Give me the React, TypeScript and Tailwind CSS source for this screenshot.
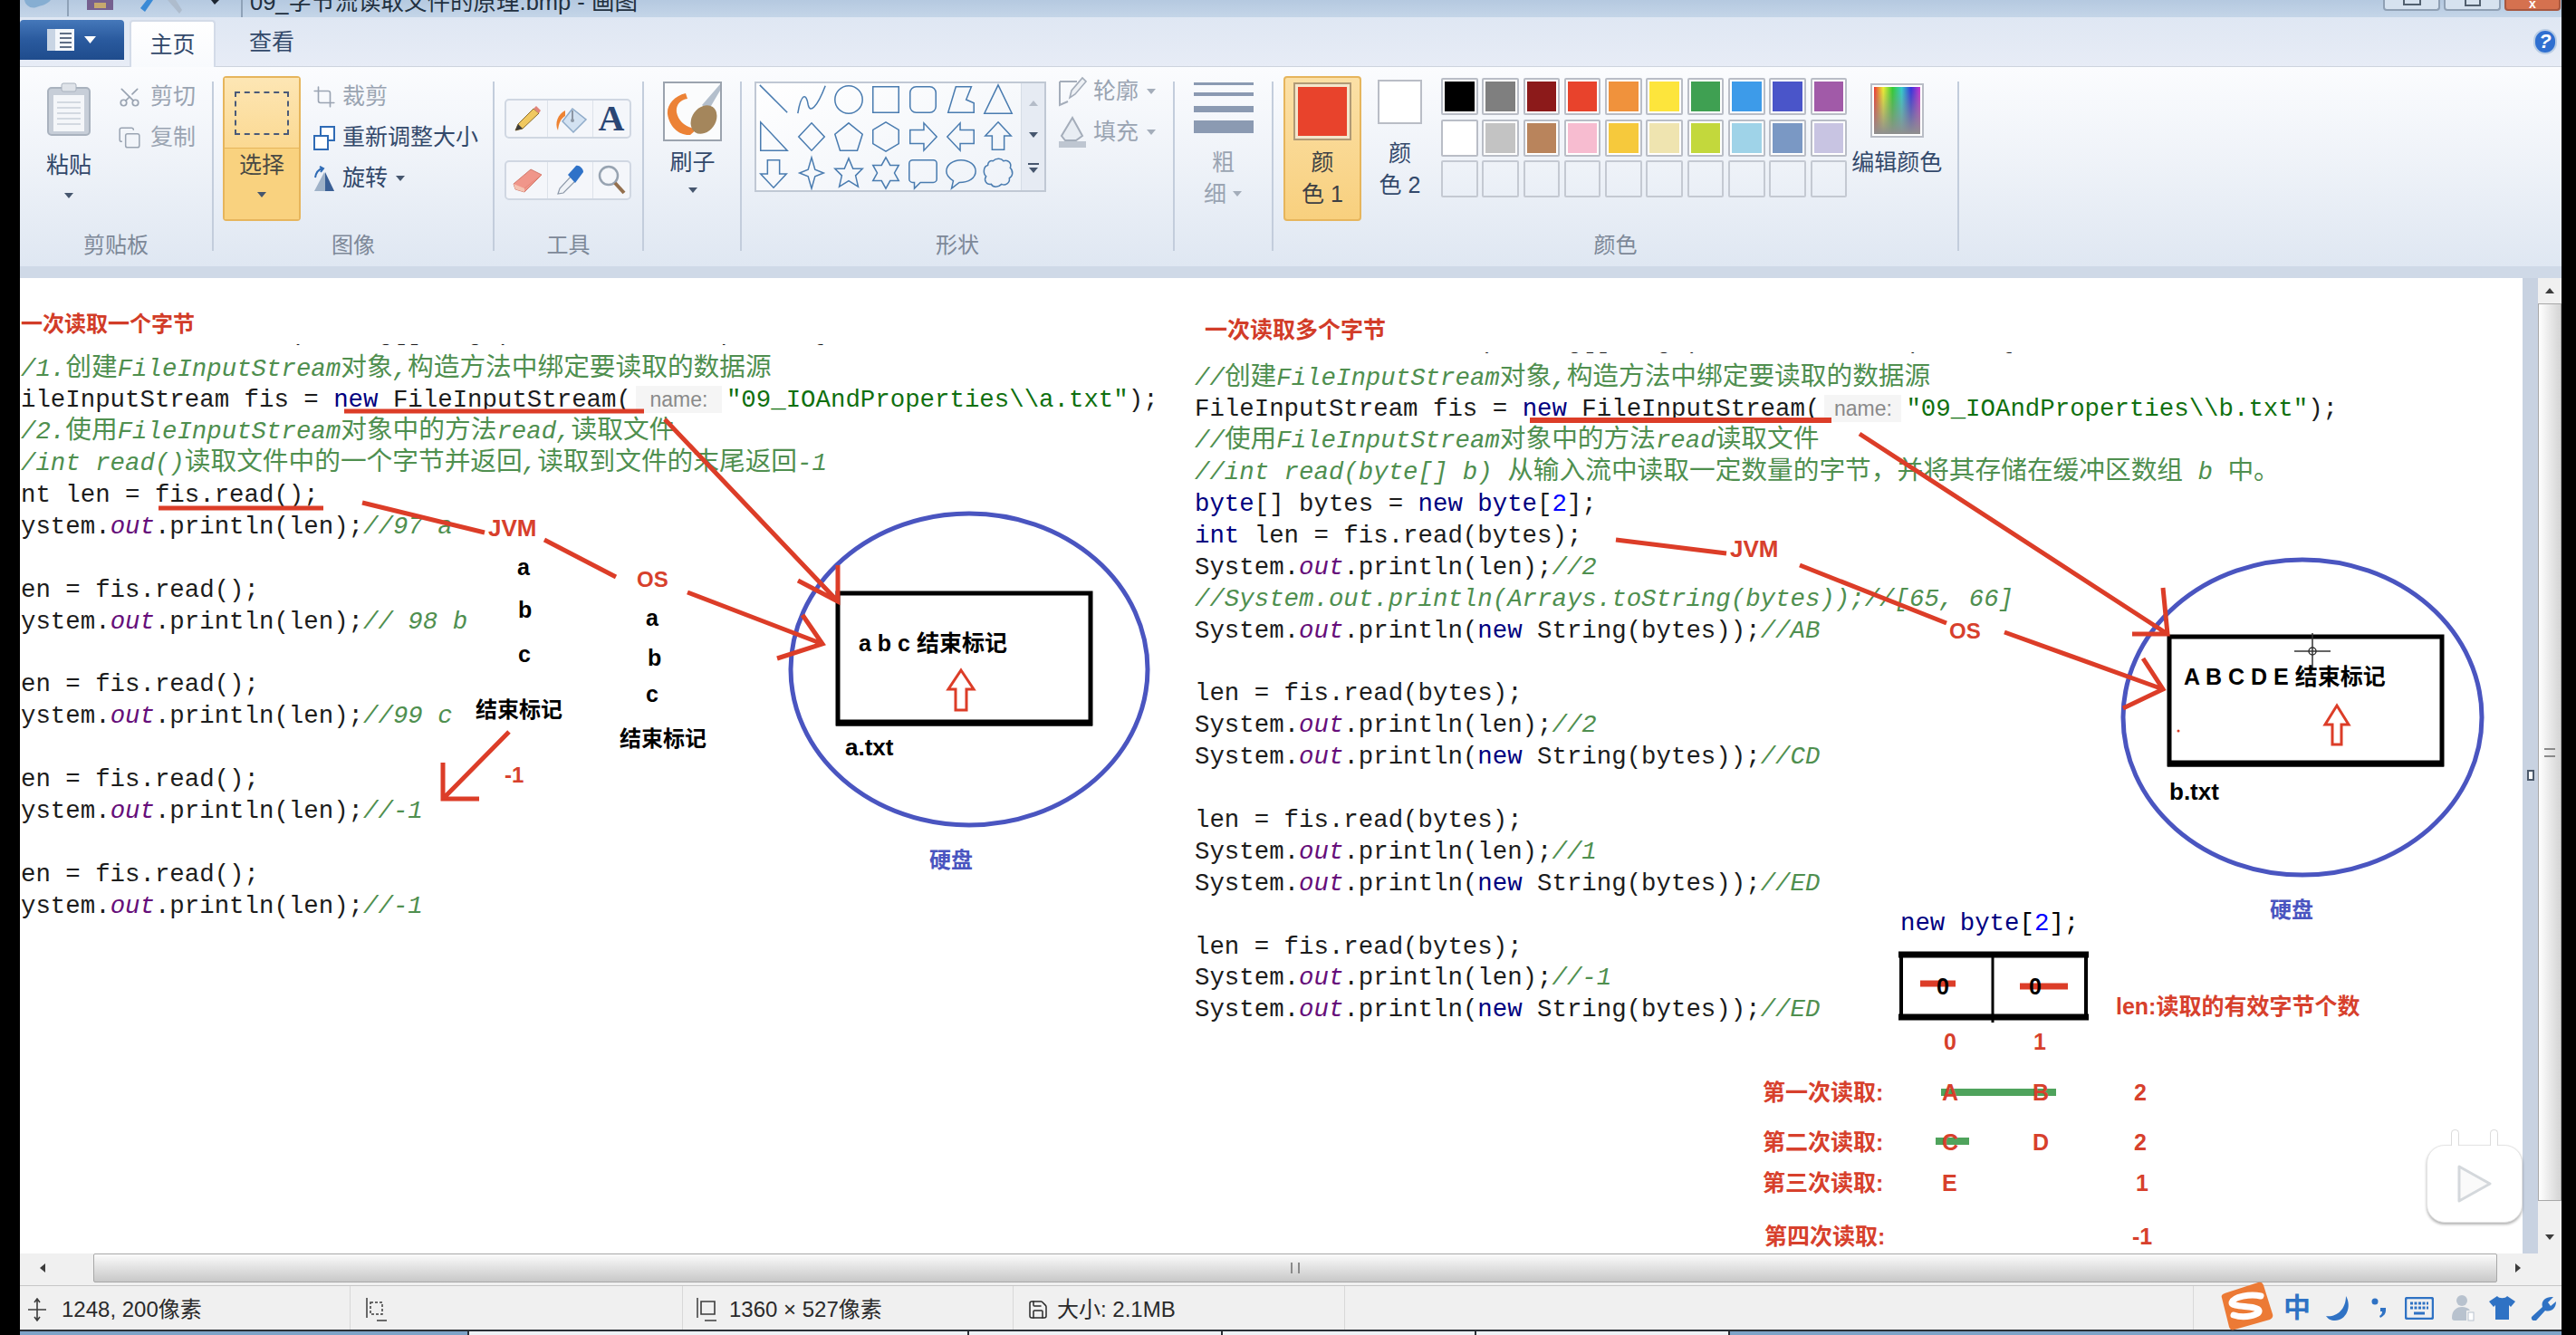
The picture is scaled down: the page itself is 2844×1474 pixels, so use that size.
import type { ReactNode } from "react";
import { Scissors, Copy, Crop, Save } from "lucide-react";

const row1 = ["#000000", "#7f7f7f", "#8c1a1a", "#e8432c", "#f0923c", "#fde53c", "#3fa052", "#3d9be9", "#4a55c9", "#a15aa8"];
const row2 = ["#ffffff", "#c3c3c3", "#b9845c", "#f7bcd0", "#f6c93c", "#efe4b0", "#c3d83c", "#9fd3e8", "#7a98c4", "#c8c4e2"];

function Caret({ dim }: { dim?: boolean }) {
  return (
    <svg width="12" height="8" viewBox="0 0 12 8" className="shrink-0">
      <path d="M1 1h10L6 7z" fill={dim ? "#a4adba" : "#46566e"} />
    </svg>
  );
}

function Sep() {
  return <div className="mt-[16px] h-[187px] w-[2px] shrink-0 bg-[#c3cddc]" />;
}

function Group({ w, label, children }: { w: string; label: string; children: ReactNode }) {
  return (
    <div className={`relative flex h-full shrink-0 flex-col ${w}`}>
      <div className="flex h-[185px]">{children}</div>
      <div className="text-center text-[24px] leading-[24px] text-[#7d8898]">{label}</div>
    </div>
  );
}

function SmallRow({ icon, text, dim, caret }: { icon: ReactNode; text: string; dim?: boolean; caret?: boolean }) {
  return (
    <div className={`flex h-[45px] items-center text-[25px] ${dim ? "text-[#9aa4b2]" : "text-[#33496b]"}`}>
      {icon}
      <span>{text}</span>
      {caret && (
        <span className="ml-[8px]">
          <Caret dim={dim} />
        </span>
      )}
    </div>
  );
}

// shapes gallery, drawn around 0,0 and moved into their cell
const shapes = [
  "M-16 -17L16 15",
  "M-16 16C-12 -8 -6 -8 -4 6C-2 16 6 10 16 -16",
  "M-16 0a16 16 0 1 0 32 0a16 16 0 1 0 -32 0Z",
  "M-15 -15H15V15H-15Z",
  "M-8 -15H8a7 7 0 0 1 7 7V8a7 7 0 0 1 -7 7H-8a7 7 0 0 1 -7 -7V-8a7 7 0 0 1 7 -7Z",
  "M-15 15L-6 -15H12L6 0L15 4V15Z",
  "M0 -17L16 16H-16Z",
  "M-15 -17V16H16Z",
  "M0 -16L15 0L0 16L-15 0Z",
  "M0 -16L16 -3L10 16H-10L-16 -3Z",
  "M0 -17L15 -8V8L0 17L-15 8V-8Z",
  "M-15 -8H1V-16L16 0L1 16V8H-15Z",
  "M15 -8H-1V-16L-16 0L-1 16V8H15Z",
  "M0 -17L15 -1H7V15H-7V-1H-15Z",
  "M0 17L15 1H7V-15H-7V1H-15Z",
  "M0 -18L4 -4L14 0L4 4L0 18L-4 4L-14 0L-4 -4Z",
  "M0 -17L5 -5L16 -5L8 3L11 16L0 9L-11 16L-8 3L-16 -5L-5 -5Z",
  "M0 -18L5 -9L15 -9L10 0L15 9L5 9L0 18L-5 9L-15 9L-10 0L-15 -9L-5 -9Z",
  "M-12 -15H12a4 4 0 0 1 4 4V7a4 4 0 0 1 -4 4H-3L-10 18V11H-12a4 4 0 0 1 -4 -4V-11a4 4 0 0 1 4 -4Z",
  "M0 -15C10 -15 17 -9 17 -2C17 6 9 11 -2 11L-11 18L-9 9C-14 6 -17 3 -17 -2C-17 -9 -10 -15 0 -15Z",
  "M-6 -14C-2 -18 4 -17 6 -14C12 -16 16 -11 14 -6C18 -2 17 4 13 6C14 12 8 15 4 13C0 17 -6 17 -8 13C-14 14 -17 8 -14 4C-18 0 -17 -8 -12 -9C-12 -13 -9 -15 -6 -14Z",
];
const cellX = [21, 63, 104, 145, 186, 228, 269];
const cellY = [20, 61, 101];

function Gallery() {
  return (
    <div className="mt-[6px] flex h-[122px] w-[322px] shrink-0 border-2 border-[#c0c8d4] bg-gradient-to-br from-white to-[#eef2f8]">
      <svg width="292" height="118" viewBox="0 0 292 118" className="shrink-0">
        {shapes.map((d, i) => (
          <path
            key={i}
            d={d}
            transform={`translate(${cellX[i % 7] - 2} ${cellY[Math.floor(i / 7)] - 2}) scale(0.95)`}
            fill="none"
            stroke="#4a7cb0"
            strokeWidth="1.6"
          />
        ))}
      </svg>
      <div className="flex flex-1 flex-col items-center justify-around border-l border-[#d5dce6] bg-[#e6ebf3] py-[4px]">
        <svg width="12" height="8" viewBox="0 0 12 8">
          <path d="M1 7h10L6 1z" fill="#b4bcc8" />
        </svg>
        <Caret />
        <div className="flex flex-col items-center gap-[2px]">
          <div className="h-[2px] w-[12px] bg-[#46566e]" />
          <Caret />
        </div>
      </div>
    </div>
  );
}

function Swatch({ color, empty }: { color?: string; empty?: boolean }) {
  return (
    <div className={`h-[41px] rounded-[2px] border-2 ${empty ? "border-[#c4c9d2]" : "border-[#b9bdc6] bg-white p-[2px]"}`}>
      {color && <div className="h-full w-full" style={{ background: color }} />}
    </div>
  );
}

function Ribbon() {
  return (
    <div className="flex h-[220px] shrink-0 bg-gradient-to-b from-[#fbfcfe] via-[#eef2f8] to-[#dfe7f2] [font-family:'Liberation_Sans','Noto_Sans_CJK_SC',sans-serif]">
      <Group w="w-[212px]" label="剪贴板">
        <div className="ml-[14px] mt-[17px] flex w-[80px] flex-col items-center text-[25px] leading-[26px] text-[#33496b]">
          <svg width="50" height="60" viewBox="0 0 50 60">
            <rect x="2" y="6" width="46" height="52" rx="4" fill="#c7ced8" stroke="#a9b2be" strokeWidth="2" />
            <rect x="8" y="14" width="34" height="40" fill="#f4f6f9" />
            <path d="M12 22h26M12 28h26M12 34h26M12 40h26M12 46h26" stroke="#d3d9e1" strokeWidth="2" />
            <rect x="17" y="1" width="16" height="9" rx="2" fill="#dfe3e9" stroke="#a9b2be" />
          </svg>
          <span className="mt-[18px]">粘贴</span>
          <span className="mt-[17px]">
            <Caret />
          </span>
        </div>
        <div className="ml-[14px] mt-[10px]">
          <SmallRow dim text="剪切" icon={<Scissors className="mr-[10px] h-[26px] w-[26px] -rotate-90" strokeWidth={1.6} />} />
          <SmallRow dim text="复制" icon={<Copy className="mr-[10px] h-[26px] w-[26px]" strokeWidth={1.4} />} />
        </div>
      </Group>
      <Sep />
      <Group w="w-[308px]" label="图像">
        <div className="ml-[10px] mt-[10px] flex h-[160px] w-[86px] flex-col rounded-[4px] border-2 border-[#e6b55c] text-[25px] leading-[26px] text-[#4a4a44]">
          <div className="flex h-[78px] items-center justify-center border-b border-[#e6b55c] bg-gradient-to-b from-[#fde6b4] to-[#fbd992]">
            <div className="h-[48px] w-[60px] border-2 border-dashed border-[#4a5a78]" />
          </div>
          <div className="flex flex-1 flex-col items-center bg-[#f9d27f] pt-[5px]">
            <span>选择</span>
            <span className="mt-[16px]">
              <Caret />
            </span>
          </div>
        </div>
        <div className="ml-[13px] mt-[10px]">
          <SmallRow dim text="裁剪" icon={<Crop className="mr-[7px] h-[26px] w-[26px]" strokeWidth={1.5} />} />
          <SmallRow
            text="重新调整大小"
            icon={
              <svg width="26" height="30" viewBox="0 0 26 30" className="mr-[7px]">
                <rect x="9" y="3" width="15" height="15" fill="#fff" stroke="#2f6bb5" strokeWidth="2" />
                <rect x="2" y="13" width="15" height="15" fill="#fff" stroke="#2f6bb5" strokeWidth="2" />
              </svg>
            }
          />
          <SmallRow
            caret
            text="旋转"
            icon={
              <svg width="26" height="30" viewBox="0 0 26 30" className="mr-[7px]">
                <path d="M13 8L24 29H2Z" fill="#9fb2c8" />
                <path d="M14 8L24 29H14Z" fill="#3a5f95" />
                <path d="M3 14C4 8 7 5 11 4M8 2l4 2l-3 4" fill="none" stroke="#2f6bb5" strokeWidth="2" />
              </svg>
            }
          />
        </div>
      </Group>
      <Sep />
      <Group w="w-[163px]" label="工具">
        <div className="ml-[11px] mt-[35px] flex flex-col gap-[24px]">
          <div className="flex h-[44px] w-[140px] rounded-[5px] border-2 border-[#d0d7e2] bg-[#f4f6fa]">
            <div className="flex w-[46px] items-center justify-center border-r border-[#dde2ea]">
              <svg width="32" height="30" viewBox="0 0 32 30">
                <path d="M3 28L6 21L23 4L29 9L11 26Z" fill="#f0c860" stroke="#8a6a2a" strokeWidth="1" />
                <path d="M23 4L26 1L31 6L29 9Z" fill="#e2857a" />
                <path d="M3 28L6 21L11 26Z" fill="#3c3c3c" />
              </svg>
            </div>
            <div className="flex w-[50px] items-center justify-center border-r border-[#dde2ea]">
              <svg width="36" height="34" viewBox="0 0 36 34">
                <path d="M20 6L35 18L21 32L9 20Z" fill="#d3e2f2" stroke="#8fabc9" strokeWidth="1.5" />
                <path d="M20 8V18" stroke="#8c96a4" strokeWidth="2" />
                <circle cx="20" cy="19" r="2" fill="#8c96a4" />
                <path d="M12 8C4 12 0 22 4 30C5 22 7 17 12 14Z" fill="#ee8333" />
              </svg>
            </div>
            <div className="flex flex-1 items-center justify-center text-[40px] font-bold leading-none text-[#2a4674] [font-family:'Liberation_Serif',serif]">
              A
            </div>
          </div>
          <div className="flex h-[44px] w-[140px] rounded-[5px] border-2 border-[#d0d7e2] bg-[#f4f6fa]">
            <div className="flex w-[46px] items-center justify-center border-r border-[#dde2ea]">
              <svg width="34" height="32" viewBox="0 0 34 32">
                <path d="M2 20L21 4L33 10L14 29L4 26Z" fill="#f0968a" stroke="#d07a6c" strokeWidth="1" />
                <path d="M2 20L14 25L14 29L4 26Z" fill="#f5c3b2" />
                <path d="M14 25L33 10" stroke="#e88577" strokeWidth="1" />
              </svg>
            </div>
            <div className="flex w-[50px] items-center justify-center border-r border-[#dde2ea]">
              <svg width="32" height="34" viewBox="0 0 32 34">
                <path d="M2 32L4 26L16 13L21 18L8 31Z" fill="#f0f3f7" stroke="#8c98a8" strokeWidth="1.2" />
                <path d="M13 11L22 1C25 0 30 4 30 8L21 20Z" fill="#2f72c8" />
              </svg>
            </div>
            <div className="flex flex-1 items-center justify-center">
              <svg width="32" height="34" viewBox="0 0 32 34">
                <circle cx="13" cy="12" r="10" fill="none" stroke="#97a3b1" strokeWidth="2.5" />
                <path d="M20 20L30 31" stroke="#94704e" strokeWidth="4" />
              </svg>
            </div>
          </div>
        </div>
      </Group>
      <Sep />
      <Group w="w-[106px]" label="">
        <div className="ml-[21px] mt-[16px] flex w-[65px] flex-col items-center text-[25px] leading-[26px] text-[#33496b]">
          <svg width="65" height="66" viewBox="0 0 65 66">
            <rect x="1" y="1" width="63" height="64" fill="#fbfcfd" stroke="#9ba3ae" strokeWidth="2" />
            <path d="M25 13C12 16 4 26 5 36C7 50 18 60 30 59L38 52C26 52 17 44 15 34C14 26 19 20 27 19Z" fill="#ec8236" />
            <path d="M50 32L63 10V3L43 26Z" fill="#b4bfcc" />
            <ellipse cx="45" cy="42" rx="13" ry="17" transform="rotate(35 45 42)" fill="#a4865c" />
          </svg>
          <span className="mt-[10px]">刷子</span>
          <span className="mt-[14px]">
            <Caret />
          </span>
        </div>
      </Group>
      <Sep />
      <Group w="w-[476px]" label="形状">
        <div className="ml-[14px] mt-[10px] flex">
          <Gallery />
          <div className="-mt-[6px] ml-[13px]">
            <SmallRow
              dim
              caret
              text="轮廓"
              icon={
                <svg width="32" height="34" viewBox="0 0 32 34" className="mr-[7px]">
                  <path d="M2 6H21M2 6V32L11 28" fill="none" stroke="#a4adba" strokeWidth="2" />
                  <path d="M13 24L15 16L27 2L31 6L19 20Z" fill="#eef1f5" stroke="#a4adba" strokeWidth="1.6" />
                </svg>
              }
            />
            <SmallRow
              dim
              caret
              text="填充"
              icon={
                <svg width="32" height="36" viewBox="0 0 32 36" className="mr-[7px]">
                  <path d="M16 2L27 22L20 27H8L4 22Z" fill="#e8edf3" stroke="#a4adba" strokeWidth="2" />
                  <rect x="1" y="28" width="30" height="7" fill="#bec6d1" />
                </svg>
              }
            />
          </div>
        </div>
      </Group>
      <Sep />
      <Group w="w-[107px]" label="">
        <div className="mt-[17px] flex w-full flex-col items-center text-[25px] leading-[26px] text-[#9aa4b2]">
          <div className="h-[3px] w-[66px] bg-[#8b9ab2]" />
          <div className="mt-[8px] h-[4px] w-[66px] bg-[#8b9ab2]" />
          <div className="mt-[11px] h-[7px] w-[66px] bg-[#8b9ab2]" />
          <div className="mt-[9px] h-[14px] w-[66px] bg-[#8b9ab2]" />
          <span className="mt-[19px]">粗</span>
          <span className="mt-[9px] flex items-center gap-[6px]">
            细
            <Caret dim />
          </span>
        </div>
      </Group>
      <Sep />
      <Group w="w-[755px]" label="颜色">
        <div className="ml-[11px] mt-[10px] flex h-[160px] w-[86px] shrink-0 flex-col items-center rounded-[4px] border-2 border-[#e6b55c] bg-gradient-to-b from-[#fbe0a6] to-[#f8d07e] text-[25px] leading-[26px] text-[#3d3f44]">
          <div className="mt-[5px] h-[64px] w-[64px] border-2 border-[#b09a76] bg-[#f3e6cc] p-[3px]">
            <div className="h-full w-full bg-[#e8432c]" />
          </div>
          <span className="mt-[11px]">颜</span>
          <span className="mt-[9px]">色 1</span>
        </div>
        <div className="mt-[14px] flex w-[85px] shrink-0 flex-col items-center text-[25px] leading-[26px] text-[#33496b]">
          <div className="h-[49px] w-[49px] border-2 border-[#b9bdc6] bg-white" />
          <span className="mt-[19px]">颜</span>
          <span className="mt-[9px]">色 2</span>
        </div>
        <div className="mt-[12px] grid h-[132px] shrink-0 grid-cols-[repeat(10,40.5px)] gap-x-[4.8px] gap-y-[4.5px] pl-[3px]">
          {row1.map((c) => (
            <Swatch key={c} color={c} />
          ))}
          {row2.map((c) => (
            <Swatch key={c} color={c} />
          ))}
          {row1.map((c) => (
            <Swatch key={c} empty />
          ))}
        </div>
        <div className="ml-[5px] mt-[18px] flex w-[100px] shrink-0 flex-col items-center text-[25px] leading-[26px] text-[#33496b]">
          <div className="h-[60px] w-[59px] border-2 border-[#b9bdc6] bg-white p-[2px]">
            <div className="h-full w-full bg-[linear-gradient(to_bottom,transparent,#8f8f8f),linear-gradient(to_right,#e33,#ee3,#3c3,#3cc,#33d,#c3c)]" />
          </div>
          <span className="mt-[14px] whitespace-nowrap">编辑颜色</span>
        </div>
      </Group>
      <Sep />
    </div>
  );
}

function TopBars() {
  return (
    <div className="shrink-0 [font-family:'Liberation_Sans','Noto_Sans_CJK_SC',sans-serif]">
      <div className="flex h-[19px] items-end overflow-hidden bg-gradient-to-b from-[#b5c9e0] to-[#c4d5e8] text-[25.5px] leading-[34px] text-[#22303f]">
        <svg width="244" height="19" viewBox="0 0 244 19" className="shrink-0">
          <path d="M5 0C6 6 12 10 18 8C24 6 30 5 34 0Z" fill="#86aed2" />
          <path d="M53 0V18" stroke="#8fa2b8" strokeWidth="2" />
          <rect x="74" y="0" width="29" height="11" fill="#75608f" />
          <rect x="82" y="3" width="13" height="6" fill="#c6a86e" />
          <path d="M140 0L133 9L138 13L147 0Z" fill="#3a8ad6" />
          <path d="M163 0L176 15L179 11L172 0Z" fill="#aebccd" />
          <path d="M211 0H220L215 5Z" fill="#1c2530" />
        </svg>
        <div className="mr-[8px] h-[19px] w-[2px] bg-[#8fa2b8]" />
        <span className="whitespace-pre">09_字节流读取文件的原理.bmp - 画图</span>
        <div className="ml-auto flex items-start gap-[4px] self-start pr-[1px]">
          <div className="flex h-[12px] w-[63px] justify-center rounded-b-[4px] border-2 border-t-0 border-[#8fa0b4] bg-[#d6e2ef]">
            <div className="h-[6px] w-[20px] border-b-2 border-l-2 border-r-2 border-[#52606f]" />
          </div>
          <div className="flex h-[12px] w-[63px] justify-center rounded-b-[4px] border-2 border-t-0 border-[#8fa0b4] bg-[#d6e2ef]">
            <div className="h-[7px] w-[18px] border-b-2 border-l-2 border-r-2 border-[#52606f]" />
          </div>
          <div className="flex h-[12px] w-[62px] justify-center rounded-b-[4px] border-2 border-t-0 border-[#a8573f] bg-[#d5714f] text-[14px] font-bold leading-[8px] text-white">
            x
          </div>
        </div>
      </div>
      <div className="flex h-[54px] items-start bg-gradient-to-b from-[#dfe7f3] to-[#e7ecf6] text-[25px] leading-none">
        <div className="mt-[3px] flex h-[44px] w-[115px] items-center justify-center gap-[10px] rounded-t-[4px] bg-gradient-to-b from-[#4578ba] via-[#2a5a9e] to-[#1f4c8d]">
          <svg width="30" height="24" viewBox="0 0 30 24">
            <rect x="0" y="0" width="30" height="24" fill="#f4f7fb" />
            <rect x="0" y="0" width="9" height="24" fill="#c9d5e4" />
            <path d="M14 5H27M14 10H27M14 15H27M14 20H27" stroke="#5f6f86" strokeWidth="2" />
          </svg>
          <svg width="15" height="10" viewBox="0 0 15 10">
            <path d="M1 1h13L7.5 9z" fill="#fff" />
          </svg>
        </div>
        <div className="ml-[6px] mt-[3px] flex h-[52px] w-[95px] items-center justify-center rounded-t-[4px] border-2 border-b-0 border-[#d3dbe8] bg-gradient-to-b from-white to-[#f8fafd] text-[#33496b]">
          主页
        </div>
        <div className="ml-[37px] flex h-[54px] items-center text-[#33496b]">查看</div>
        <div className="ml-auto mr-[5px] mt-[13px] flex h-[28px] w-[26px] items-center justify-center rounded-full border-2 border-[#b8cce4] bg-[#2f6fd0] text-[22px] font-bold italic text-white">
          ?
        </div>
      </div>
      <div className="h-[1px] bg-[#cdd3de]" />
    </div>
  );
}

function Hint({ w }: { w: string }) {
  return (
    <span className={`mx-[5px] inline-block bg-[#f5f5f5] text-center text-[23px] leading-[30px] text-[#8a8a8a] [font-family:'Liberation_Sans',sans-serif] ${w}`}>
      name:
    </span>
  );
}

function K({ children }: { children: ReactNode }) {
  return <span className="text-[#000080]">{children}</span>;
}

function Cm({ text }: { text: string }) {
  return (
    <span className="italic text-[#4f8f4f]">
      {text.split(/([\u3000-\u9fff\uff00-\uffef]+)/).map((run, i) =>
        i % 2 ? (
          <span key={i} className="text-[28.7px] not-italic leading-none">
            {run}
          </span>
        ) : (
          run
        ),
      )}
    </span>
  );
}

function Pr({ s }: { s: string }) {
  return (
    <>
      {s}.<span className="italic text-[#660e7a]">out</span>.println
    </>
  );
}

function Ln({ children }: { children?: ReactNode }) {
  return <div className="h-[34.9px] whitespace-pre">{children}</div>;
}

function Specks({ text }: { text: string }) {
  return (
    <div className="flex h-[6px] items-end overflow-hidden">
      <div className="whitespace-pre">{text}</div>
    </div>
  );
}

function LeftCode() {
  return (
    <div className="w-[1296px] shrink-0 pl-[1px] pt-[39px] text-[27.4px] leading-[34.9px] text-[#1c1c1c] [font-family:'Liberation_Mono','Noto_Sans_CJK_SC',monospace]">
      <div className="mb-[10px] h-[24px] text-[24px] font-bold leading-[24px] text-[#d23c28] [font-family:'Liberation_Sans','Noto_Sans_CJK_SC',sans-serif]">
        一次读取一个字节
      </div>
      <Specks text="c static void main(String[] args) throws IOException {" />
      <div className="h-[4.5px]" />
      <Ln><Cm text="/1.创建FileInputStream对象,构造方法中绑定要读取的数据源" /></Ln>
      <Ln>
        ileInputStream fis = <K>new</K> FileInputStream(<Hint w="w-[95px]" />
        <span className="text-[#107010]">"09_IOAndProperties\\a.txt"</span>);
      </Ln>
      <Ln><Cm text="/2.使用FileInputStream对象中的方法read,读取文件" /></Ln>
      <Ln><Cm text="/int read()读取文件中的一个字节并返回,读取到文件的末尾返回-1" /></Ln>
      <Ln>nt len = fis.read();</Ln>
      <Ln><Pr s="ystem" />(len);<Cm text="//97 a" /></Ln>
      <Ln />
      <Ln>en = fis.read();</Ln>
      <Ln><Pr s="ystem" />(len);<Cm text="// 98 b" /></Ln>
      <Ln />
      <Ln>en = fis.read();</Ln>
      <Ln><Pr s="ystem" />(len);<Cm text="//99 c" /></Ln>
      <Ln />
      <Ln>en = fis.read();</Ln>
      <Ln><Pr s="ystem" />(len);<Cm text="//-1" /></Ln>
      <Ln />
      <Ln>en = fis.read();</Ln>
      <Ln><Pr s="ystem" />(len);<Cm text="//-1" /></Ln>
    </div>
  );
}

function RightCode() {
  return (
    <div className="pl-[1px] pt-[45px] text-[27.4px] leading-[34.9px] text-[#1c1c1c] [font-family:'Liberation_Mono','Noto_Sans_CJK_SC',monospace]">
      <div className="mb-[12px] ml-[11px] h-[25px] text-[25px] font-bold leading-[25px] text-[#d23c28] [font-family:'Liberation_Sans','Noto_Sans_CJK_SC',sans-serif]">
        一次读取多个字节
      </div>
      <Specks text="ic static void main(String[] args) throws IOException {" />
      <div className="h-[5.5px]" />
      <Ln><Cm text="//创建FileInputStream对象,构造方法中绑定要读取的数据源" /></Ln>
      <Ln>
        FileInputStream fis = <K>new</K> FileInputStream(<Hint w="w-[85px]" />
        <span className="text-[#107010]">"09_IOAndProperties\\b.txt"</span>);
      </Ln>
      <Ln><Cm text="//使用FileInputStream对象中的方法read读取文件" /></Ln>
      <Ln><Cm text="//int read(byte[] b) 从输入流中读取一定数量的字节，并将其存储在缓冲区数组 b 中。" /></Ln>
      <Ln><K>byte</K>[] bytes = <K>new</K> <K>byte</K>[<span className="text-[#0000ff]">2</span>];</Ln>
      <Ln><K>int</K> len = fis.read(bytes);</Ln>
      <Ln><Pr s="System" />(len);<Cm text="//2" /></Ln>
      <Ln><Cm text="//System.out.println(Arrays.toString(bytes));//[65, 66]" /></Ln>
      <Ln><Pr s="System" />(<K>new</K> String(bytes));<Cm text="//AB" /></Ln>
      <Ln />
      <Ln>len = fis.read(bytes);</Ln>
      <Ln><Pr s="System" />(len);<Cm text="//2" /></Ln>
      <Ln><Pr s="System" />(<K>new</K> String(bytes));<Cm text="//CD" /></Ln>
      <Ln />
      <Ln>len = fis.read(bytes);</Ln>
      <Ln><Pr s="System" />(len);<Cm text="//1" /></Ln>
      <Ln><Pr s="System" />(<K>new</K> String(bytes));<Cm text="//ED" /></Ln>
      <Ln />
      <Ln>len = fis.read(bytes);</Ln>
      <Ln><Pr s="System" />(len);<Cm text="//-1" /></Ln>
      <Ln><Pr s="System" />(<K>new</K> String(bytes));<Cm text="//ED" /></Ln>
    </div>
  );
}

// the red marker lines, circles and boxes that were painted on the bitmap, in page coordinates
function Drawing() {
  const red = "#dc3d28";
  const blue = "#4a55c0";
  return (
    <svg width="2763" height="1077" viewBox="22 306 2763 1077" className="pointer-events-none absolute left-0 top-0">
      <ellipse cx="1070" cy="738" rx="197" ry="172" fill="none" stroke={blue} strokeWidth="5" />
      <ellipse cx="2542" cy="791" rx="198" ry="174" fill="none" stroke={blue} strokeWidth="5" />

      <path d="M925 654H1204V798H925Z" fill="none" stroke="#000" strokeWidth="5" />
      <path d="M923 797H1206" stroke="#000" strokeWidth="7" />
      <path d="M2395 702H2696V843H2395Z" fill="none" stroke="#000" strokeWidth="5" />
      <path d="M2393 842H2698" stroke="#000" strokeWidth="7" />

      <g fill="none" stroke={red} strokeWidth="5">
        <path d="M380 453H711" />
        <path d="M175 560H357" />
        <path d="M1689 463H2022" strokeWidth="6" />
        <path d="M400 554L535 587" />
        <path d="M601 595L680 636" />
        <path d="M759 653L908 710M886 678L908 710L858 726" />
        <path d="M734 462L925 663M925 623L925 663L881 640" />
        <path d="M562 807L489 881M489 841V881H529" />
        <path d="M1784 595L1906 610" />
        <path d="M1987 623L2149 687" />
        <path d="M2213 697L2388 760M2366 726L2388 760L2344 781" />
        <path d="M2053 478L2393 699M2388 648L2393 699H2354" />
      </g>
      <path d="M1061 739L1075 760H1067V783H1055V760H1047Z" fill="#fff" stroke={red} strokeWidth="3" />
      <path d="M2580 778L2593 799H2585V821H2575V799H2567Z" fill="#fff" stroke={red} strokeWidth="3" />

      <g stroke="#333" strokeWidth="1.5" fill="none">
        <path d="M2553 698V738M2533 718H2573" />
        <circle cx="2553" cy="718" r="4" />
      </g>
      <circle cx="2405" cy="806" r="1.5" fill={red} />

      <path d="M2099 1054H2303V1121H2099Z" fill="none" stroke="#000" strokeWidth="4" />
      <path d="M2096 1053H2306M2096 1122H2306" stroke="#000" strokeWidth="7" />
      <path d="M2200 1051V1128" stroke="#000" strokeWidth="3" />
      <path d="M2120 1085H2159M2230 1088H2283" stroke={red} strokeWidth="7" />
      <path d="M2143 1205H2270M2137 1259H2174" stroke="#4fa35c" strokeWidth="8" />
    </svg>
  );
}

function Mark({ className, children }: { className: string; children: ReactNode }) {
  return (
    <div className={`absolute -translate-y-1/2 whitespace-pre font-bold leading-none [font-family:'Liberation_Sans','Noto_Sans_CJK_SC',sans-serif] ${className}`}>
      {children}
    </div>
  );
}

function Labels() {
  const r = "text-[#d7402c]";
  return (
    <>
      <Mark className={`left-[517px] top-[276px] text-[26px] ${r}`}>JVM</Mark>
      <Mark className={`left-[681px] top-[333px] text-[24px] ${r}`}>OS</Mark>
      <Mark className={`left-[535px] top-[549px] text-[24px] ${r}`}>-1</Mark>
      <Mark className="left-[549px] top-[319px] text-[25px] text-black">a</Mark>
      <Mark className="left-[550px] top-[366px] text-[25px] text-black">b</Mark>
      <Mark className="left-[550px] top-[415px] text-[25px] text-black">c</Mark>
      <Mark className="left-[503px] top-[477px] text-[24px] text-black">结束标记</Mark>
      <Mark className="left-[691px] top-[375px] text-[25px] text-black">a</Mark>
      <Mark className="left-[693px] top-[419px] text-[25px] text-black">b</Mark>
      <Mark className="left-[691px] top-[459px] text-[25px] text-black">c</Mark>
      <Mark className="left-[662px] top-[509px] text-[24px] text-black">结束标记</Mark>
      <Mark className="left-[926px] top-[403px] text-[25px] text-black">a b c 结束标记</Mark>
      <Mark className="left-[911px] top-[518px] text-[26px] text-black">a.txt</Mark>
      <Mark className="left-[1004px] top-[643px] text-[24px] text-[#4a55c0]">硬盘</Mark>

      <Mark className={`left-[1888px] top-[299px] text-[26px] ${r}`}>JVM</Mark>
      <Mark className={`left-[2130px] top-[390px] text-[24px] ${r}`}>OS</Mark>
      <Mark className="left-[2389px] top-[440px] text-[25px] text-black">A B C D E 结束标记</Mark>
      <Mark className="left-[2373px] top-[567px] text-[26px] text-black">b.txt</Mark>
      <Mark className="left-[2484px] top-[698px] text-[24px] text-[#4a55c0]">硬盘</Mark>
      <div className="absolute left-[2076px] top-[696px] text-[27.4px] leading-[34.9px] [font-family:'Liberation_Mono',monospace]">
        <K>new byte</K>[<span className="text-[#0000ff]">2</span>];
      </div>
      <Mark className="left-[2116px] top-[782px] text-[25px] text-black">0</Mark>
      <Mark className="left-[2218px] top-[782px] text-[25px] text-black">0</Mark>
      <Mark className={`left-[2314px] top-[804px] text-[25px] ${r}`}>len:读取的有效字节个数</Mark>
      <Mark className={`left-[2124px] top-[843px] text-[25px] ${r}`}>0</Mark>
      <Mark className={`left-[2223px] top-[843px] text-[25px] ${r}`}>1</Mark>

      <Mark className={`left-[1924px] top-[899px] text-[25px] ${r}`}>第一次读取:</Mark>
      <Mark className={`left-[2122px] top-[899px] text-[25px] ${r}`}>A</Mark>
      <Mark className={`left-[2222px] top-[899px] text-[25px] ${r}`}>B</Mark>
      <Mark className={`left-[2334px] top-[899px] text-[25px] ${r}`}>2</Mark>

      <Mark className={`left-[1924px] top-[954px] text-[25px] ${r}`}>第二次读取:</Mark>
      <Mark className={`left-[2122px] top-[954px] text-[25px] ${r}`}>C</Mark>
      <Mark className={`left-[2222px] top-[954px] text-[25px] ${r}`}>D</Mark>
      <Mark className={`left-[2334px] top-[954px] text-[25px] ${r}`}>2</Mark>

      <Mark className={`left-[1924px] top-[999px] text-[25px] ${r}`}>第三次读取:</Mark>
      <Mark className={`left-[2122px] top-[999px] text-[25px] ${r}`}>E</Mark>
      <Mark className={`left-[2336px] top-[999px] text-[25px] ${r}`}>1</Mark>

      <Mark className={`left-[1926px] top-[1058px] text-[25px] ${r}`}>第四次读取:</Mark>
      <Mark className={`left-[2332px] top-[1058px] text-[25px] ${r}`}>-1</Mark>
    </>
  );
}

function VScroll() {
  return (
    <div className="flex w-[26px] flex-col items-center bg-[#f0f0f0]">
      <div className="flex h-[28px] items-center">
        <svg width="12" height="8" viewBox="0 0 12 8">
          <path d="M1 7h10L6 1z" fill="#3c3c3c" />
        </svg>
      </div>
      <div className="flex h-[991px] w-full items-center justify-center border border-[#a8a8a8] bg-gradient-to-r from-white to-[#d4d4d4]">
        <div className="h-[10px] w-[12px] border-b-2 border-t-2 border-[#8a8a8a]" />
      </div>
      <div className="flex flex-1 items-end pb-[14px]">
        <svg width="12" height="8" viewBox="0 0 12 8">
          <path d="M1 1h10L6 7z" fill="#3c3c3c" />
        </svg>
      </div>
    </div>
  );
}

function HScroll() {
  return (
    <div className="h-[35px] shrink-0 bg-[#f0f0f0] pb-[3px]">
      <div className="flex h-[32px] items-center">
        <div className="flex w-[81px] justify-center pr-[52px] pl-[20px]">
          <svg width="8" height="12" viewBox="0 0 8 12">
            <path d="M7 1v10L1 6z" fill="#3c3c3c" />
          </svg>
        </div>
        <div className="flex h-[32px] w-[2654px] items-center justify-center rounded-[2px] border border-[#a8a8a8] bg-gradient-to-b from-[#fbfbfb] to-[#c8c8c8]">
          <div className="h-[12px] w-[10px] border-l-2 border-r-2 border-[#8a8a8a]" />
        </div>
        <div className="flex w-[46px] justify-center">
          <svg width="8" height="12" viewBox="0 0 8 12">
            <path d="M1 1v10L7 6z" fill="#3c3c3c" />
          </svg>
        </div>
      </div>
    </div>
  );
}

function StatusBar() {
  return (
    <div className="flex h-[49px] shrink-0 items-stretch border-t border-[#c6c6c6] bg-[#f0f0f0] text-[24px] text-[#2a2a2a] [font-family:'Liberation_Sans','Noto_Sans_CJK_SC',sans-serif]">
      <div className="flex w-[365px] items-center border-r border-[#d8d8d8] pl-[8px] pt-[3px]">
        <svg width="22" height="26" viewBox="0 0 22 26" className="mr-[16px]">
          <path d="M11 1V25M1 13H21M8 5l3-4l3 4M8 21l3 4l3-4" fill="none" stroke="#3c3c3c" strokeWidth="1.6" />
        </svg>
        1248, 200像素
      </div>
      <div className="flex w-[367px] items-center border-r border-[#d8d8d8] pl-[15px] pt-[3px]">
        <svg width="26" height="30" viewBox="0 0 26 30">
          <path d="M7 7h13v13H7z" fill="none" stroke="#3c3c3c" strokeWidth="1.5" strokeDasharray="3 2" />
          <path d="M3 2V24M14 27H25" stroke="#3c3c3c" strokeWidth="1.5" />
        </svg>
      </div>
      <div className="flex w-[365px] items-center border-r border-[#d8d8d8] pl-[14px] pt-[3px]">
        <svg width="24" height="30" viewBox="0 0 24 30" className="mr-[13px]">
          <path d="M6 6h15v14H6z" fill="none" stroke="#3c3c3c" strokeWidth="1.6" />
          <path d="M2 2V24M10 27H23" stroke="#3c3c3c" strokeWidth="1.5" />
        </svg>
        1360 × 527像素
      </div>
      <div className="flex w-[366px] items-center border-r border-[#d8d8d8] pl-[15px] pt-[3px]">
        <Save className="mr-[9px] h-[24px] w-[24px]" strokeWidth={1.5} />
        大小: 2.1MB
      </div>
      <div className="w-[937px] border-r border-[#d8d8d8]" />
      <div className="relative flex flex-1 items-center pl-[30px]">
        {/* input method tray */}
        <svg width="58" height="56" viewBox="0 0 58 56" className="-mt-[4px] shrink-0">
          <path d="M4 14L41 2C44 1 46 2 47 5L57 37C58 40 56 42 54 43L15 54C12 55 10 54 9 51L1 19C0 16 2 15 4 14Z" fill="#ec7a35" />
          <path d="M44 17C32 14 14 18 12 24C11 30 40 27 42 33C43 38 26 42 14 38" fill="none" stroke="#fff" strokeWidth="7" strokeLinecap="round" />
        </svg>
        <span className="ml-[12px] flex w-[28px] justify-center text-[30px] font-bold leading-none text-[#2f72c4]">中</span>
        <svg width="29" height="27" viewBox="0 0 29 27" className="ml-[18px]">
          <path d="M22 0C29 12 22 27 10 27C5 27 2 25 0 22C10 24 22 16 22 0Z" fill="#2f72c4" />
        </svg>
        <svg width="18" height="24" viewBox="0 0 18 24" className="ml-[21px]">
          <circle cx="4" cy="5" r="3.5" fill="#2f72c4" />
          <path d="M10 12h6v3c0 3-2 6-6 8l-1-2c2-1 3-3 3-5h-2z" fill="#2f72c4" />
        </svg>
        <svg width="32" height="25" viewBox="0 0 32 25" className="ml-[19px]">
          <rect x="1" y="1" width="30" height="23" rx="2" fill="none" stroke="#2f72c4" strokeWidth="2.5" />
          <path d="M6 7H26M6 12H26" stroke="#2f72c4" strokeWidth="3" strokeDasharray="3 1.5" />
          <path d="M10 18H22" stroke="#2f72c4" strokeWidth="3" />
        </svg>
        <svg width="27" height="30" viewBox="0 0 27 30" className="ml-[18px]">
          <circle cx="13" cy="7" r="6" fill="#b8c2ce" />
          <path d="M2 26C2 17 8 14 13 14C17 14 20 15 22 18H18V29H5C3 29 2 28 2 26Z" fill="#b8c2ce" />
          <rect x="20" y="20" width="6" height="9" fill="#fff" stroke="#b8c2ce" />
        </svg>
        <svg width="29" height="26" viewBox="0 0 29 26" className="ml-[16px]">
          <path d="M9 0C11 3 18 3 20 0L29 6L24 12L22 10V26H7V10L5 12L0 6Z" fill="#2f72c4" />
        </svg>
        <svg width="29" height="27" viewBox="0 0 29 27" className="ml-[16px]">
          <path d="M2 23L14 12C12 6 17 0 26 1L20 7L23 11L29 6C29 14 23 18 17 16L7 27C4 28 1 26 2 23Z" fill="#2f72c4" />
        </svg>
      </div>
    </div>
  );
}

function Taskbar() {
  return (
    <div className="flex h-[7px] shrink-0 border-t-2 border-[#2b2f36] bg-[#7ea3c8]">
      <div className="w-[494px]" />
      <div className="w-[554px] border-l-2 border-r-2 border-[#2b2f36] bg-[#eef2f6]" />
      <div className="w-[280px] border-r-2 border-[#2b2f36] bg-[#eef2f6]" />
      <div className="w-[280px] border-r-2 border-[#2b2f36] bg-[#eef2f6]" />
      <div className="w-[280px] border-r-2 border-[#2b2f36] bg-[#eef2f6]" />
    </div>
  );
}

export default function App() {
  return (
    <div className="flex h-[1474px] w-[2844px] overflow-hidden bg-black pl-[22px] pr-[16px]">
      <div className="flex w-[2806px] flex-col">
        <TopBars />
        <Ribbon />
        <div className="h-[13px] shrink-0 bg-[#cfd9e7]" />
        <div className="relative flex h-[1077px] shrink-0">
          <div className="relative flex w-[2763px] shrink-0 overflow-hidden bg-white">
            <LeftCode />
            <RightCode />
            <Drawing />
            <Labels />
          </div>
          <div className="flex w-[17px] flex-col items-center justify-center bg-[#c8d2e1]">
            <div className="mt-[20px] h-[12px] w-[8px] border-2 border-[#4c5a6c] bg-white" />
          </div>
          <VScroll />
          {/* video player's floating button, over the window */}
          <div className="absolute left-[2657px] top-[957px] flex h-[86px] w-[106px] items-center justify-center rounded-[20px] border border-[#e4e4e4] bg-white shadow-[0_2px_3px_rgba(0,0,0,0.3)]">
            <div className="absolute -top-[18px] left-[26px] h-[18px] w-[9px] rounded-t-full border border-b-0 border-[#dcdcdc] bg-white" />
            <div className="absolute -top-[18px] right-[26px] h-[18px] w-[9px] rounded-t-full border border-b-0 border-[#dcdcdc] bg-white" />
            <svg width="40" height="42" viewBox="0 0 40 42">
              <path d="M3 2L37 21L3 40Z" fill="#fafafa" stroke="#d4d8dc" strokeWidth="3" strokeLinejoin="round" />
            </svg>
          </div>
        </div>
        <HScroll />
        <StatusBar />
        <Taskbar />
      </div>
    </div>
  );
}
